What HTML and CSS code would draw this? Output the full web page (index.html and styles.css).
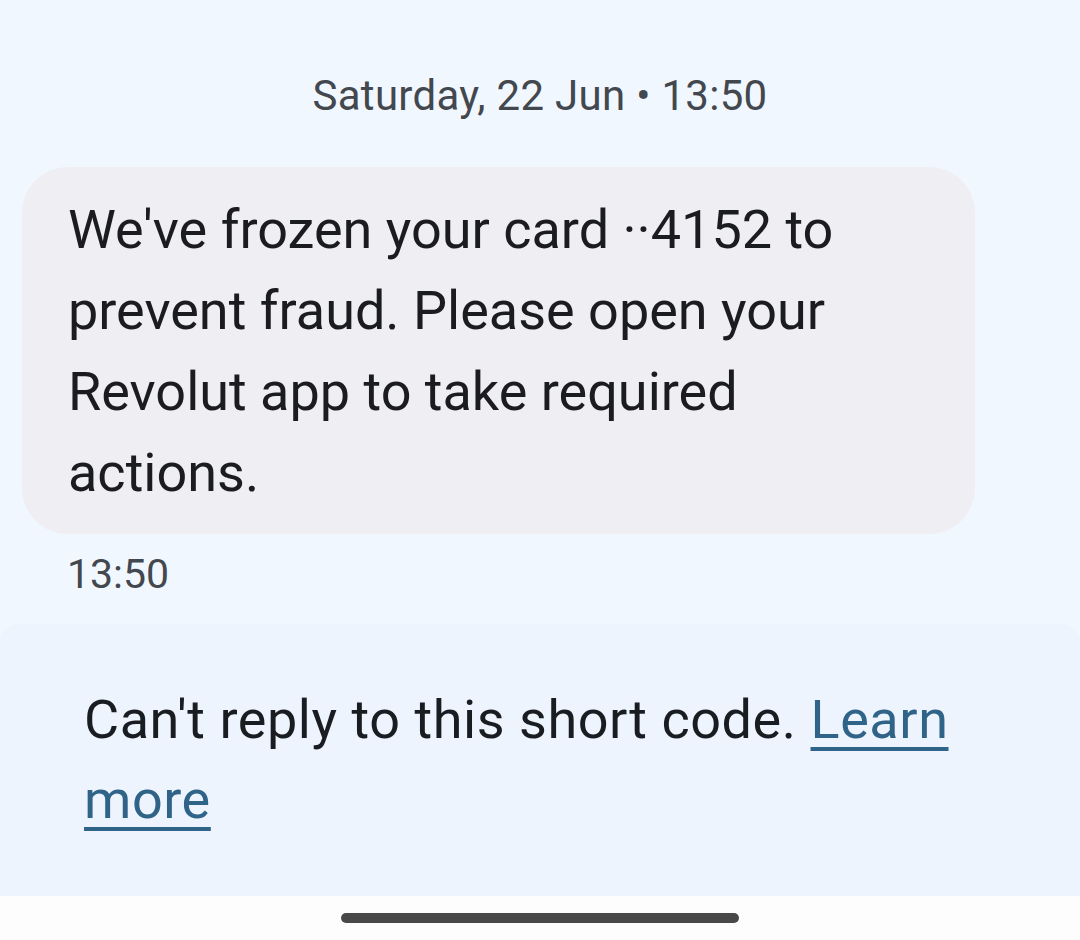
FILE: index.html
```html
<!DOCTYPE html>
<html lang="en">
<head>
<meta charset="utf-8">
<link rel="stylesheet" href="styles.css">
</head>
<body>
<div class="screen">
  <main class="thread">
    <div class="date-header">Saturday, 22 Jun • 13:50</div>
    <div class="bubble">We've frozen your card ··4152 to prevent fraud. Please open your Revolut app to take required actions.</div>
    <div class="timestamp">13:50</div>
  </main>
  <section class="notice">
    <p class="notice-text">Can't reply to this short code. <a class="link" href="#">Learn more</a></p>
  </section>
  <footer class="navbar">
    <div class="home-indicator"></div>
  </footer>
</div>
</body>
</html>
```

FILE: styles.css
```css
* { box-sizing: border-box; }
html, body { margin: 0; padding: 0; }
body {
  background: #f1f7fe;
  font-family: Roboto, "Noto Sans", sans-serif;
  width: 1080px;
  height: 940px;
  overflow: hidden;
}
.screen {
  display: flex;
  flex-direction: column;
  height: 940px;
}
.thread {
  flex: 1;
  display: flex;
  flex-direction: column;
  align-items: flex-start;
  padding: 71px 0 0 22px;
}
.date-header {
  width: 1036px;
  text-align: center;
  font-size: 42px;
  letter-spacing: 0.3px;
  color: #43474e;
  line-height: 50px;
}
.bubble {
  margin-top: 46px;
  width: 953px;
  background: #efeef3;
  border-radius: 46px;
  padding: 22px 40px 21px 46px;
  font-size: 54px;
  line-height: 81px;
  color: #1b1c20;
}
.timestamp {
  margin-top: 15px;
  margin-left: 45px;
  font-size: 41px;
  line-height: 50px;
  color: #43474e;
}
.notice {
  height: 272px;
  background: #edf4fd;
  border-radius: 18px 18px 0 0;
  padding: 0 80px 0 84px;
}
.notice-text {
  margin: 0;
  padding-top: 56px;
  font-size: 54px;
  letter-spacing: 0.55px;
  line-height: 80px;
  color: #191c20;
}
.link {
  color: #2f6388;
  text-decoration: underline;
  text-decoration-thickness: 4px;
  text-underline-offset: 9px;
}
.navbar {
  height: 44px;
  background: #fdfdfe;
  display: flex;
  justify-content: center;
  padding-top: 17px;
}
.home-indicator {
  width: 398px;
  height: 10px;
  border-radius: 5px;
  background: #484848;
}
```
